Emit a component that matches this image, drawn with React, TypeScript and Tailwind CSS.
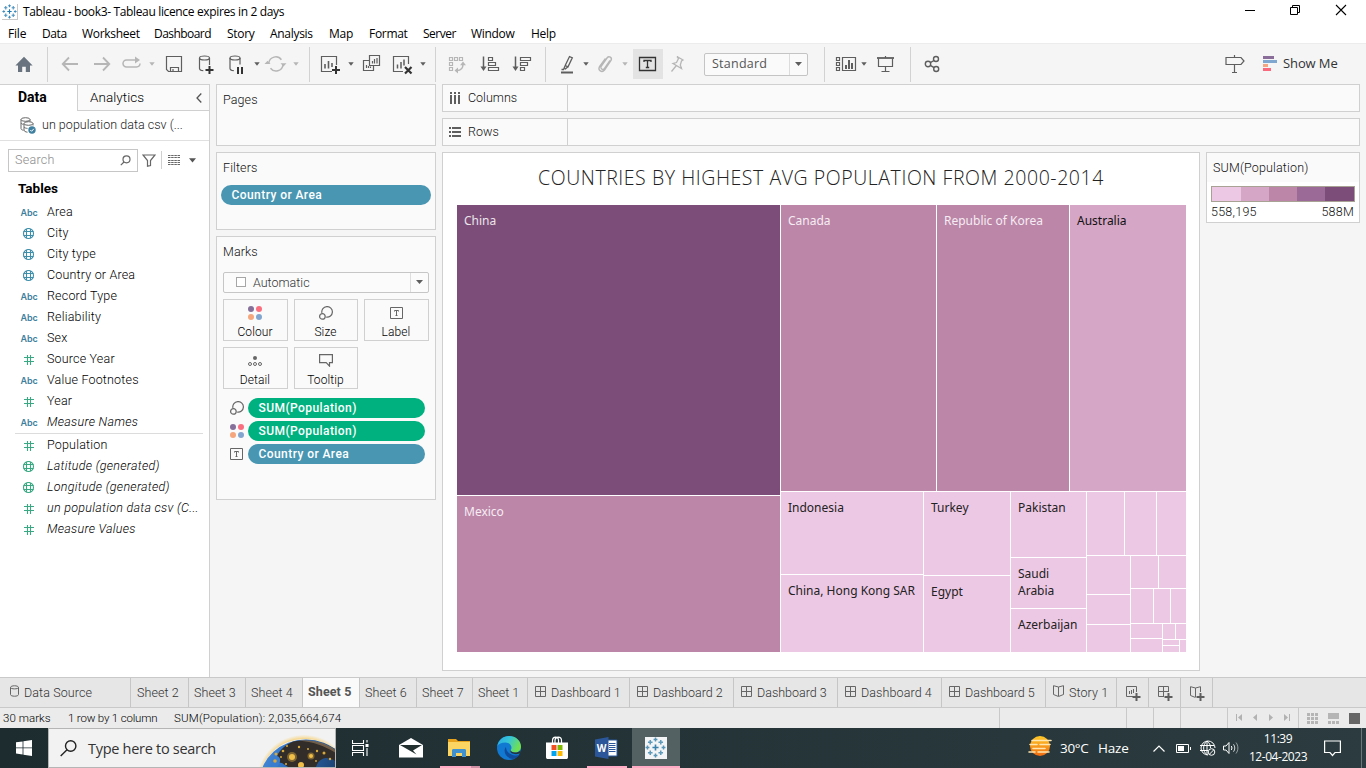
import React from "react";

type Kids = { children?: React.ReactNode };

/* ---------- small helpers ---------- */

const Glyph = ({ children, dim = false }: Kids & { dim?: boolean }) => (
  <svg
    width="24"
    height="24"
    viewBox="0 0 24 24"
    fill="none"
    strokeWidth="1.2"
    className={dim ? "shrink-0 stroke-[#b6b6b6] text-[#b6b6b6]" : "shrink-0 stroke-[#5e5e5e] text-[#5e5e5e]"}
  >
    {children}
  </svg>
);

const Caret = ({ dim = false }: { dim?: boolean }) => (
  <svg width="6" height="4" viewBox="0 0 6 4" className={dim ? "shrink-0 fill-[#b6b6b6]" : "shrink-0 fill-[#5e5e5e]"}>
    <path d="M0.3 0.3h5.4L3 3.7z" />
  </svg>
);

const WideCaret = () => (
  <svg width="7" height="4" viewBox="0 0 7 4" className="shrink-0 fill-[#5e5e5e]">
    <path d="M0 0h7L3.5 4z" />
  </svg>
);

const Cell = ({ className, children }: Kids & { className: string }) => (
  <div className={"flex shrink-0 items-center justify-center " + className}>{children}</div>
);

const Sep = () => <div className="h-[35px] w-px shrink-0 bg-[#d2d2d2]" />;

/* ---------- title bar and menu ---------- */

const TableauMark = ({ size, color }: { size: number; color: string }) => {
  const plus = (x: number, y: number, r: number) => `M${x - r} ${y}h${2 * r}M${x} ${y - r}v${2 * r}`;
  return (
    <svg width={size} height={size} viewBox="0 0 22 22" fill="none" stroke={color}>
      <path strokeWidth="1.7" d={plus(11, 11, 3.2)} />
      <path strokeWidth="1.6" opacity="0.8" d={plus(5.5, 5.5, 2.4) + plus(16.5, 5.5, 2.4) + plus(5.5, 16.5, 2.4) + plus(16.5, 16.5, 2.4)} />
      <path strokeWidth="1.5" opacity="0.85" d={plus(11, 2.6, 2) + plus(11, 19.4, 2) + plus(2.6, 11, 2) + plus(19.4, 11, 2)} />
    </svg>
  );
};

const TitleBar = () => (
  <div className="flex h-6 items-center bg-white">
    <div className="ml-[2px] mb-[1px] flex h-4 w-4 items-center justify-center border-b border-r border-[#c9c9c9]">
      <TableauMark size={15} color="#1f78b0" />
    </div>
    <span className="ml-[5px] whitespace-nowrap font-['Open_Sans'] text-[12px] tracking-[-0.35px] text-black">
      Tableau - book3- Tableau licence expires in 2 days
    </span>
    <svg className="ml-auto mr-[17px]" width="104" height="16" viewBox="0 0 104 16" fill="none" stroke="#000">
      <path d="M0 6.500h10" />
      <path d="M45.500 3.500h7v7h-7zM47.500 3.500v-2h7v7h-2" />
      <path d="M91 1l10 10M101 1l-10 10" strokeWidth="1.1" />
    </svg>
  </div>
);

const MenuBar = () => (
  <div className="flex h-[19px] items-center bg-white font-['Open_Sans'] text-[12px] text-black">
    <span className="ml-2 w-[34px] tracking-[-0.2px]">File</span>
    <span className="w-10 tracking-[-0.4px]">Data</span>
    <span className="w-[72px] tracking-[-0.3px]">Worksheet</span>
    <span className="w-[73px] tracking-[-0.55px]">Dashboard</span>
    <span className="w-[43px] tracking-[-0.3px]">Story</span>
    <span className="w-[59px] tracking-[-0.3px]">Analysis</span>
    <span className="w-10 tracking-[-0.2px]">Map</span>
    <span className="w-[54px] tracking-[-0.3px]">Format</span>
    <span className="w-12 tracking-[-0.5px]">Server</span>
    <span className="w-[60px] tracking-[-0.3px]">Window</span>
    <span className="tracking-[-0.3px]">Help</span>
  </div>
);

/* ---------- toolbar ---------- */

const Plus = ({ x, y, c = "#333" }: { x: number; y: number; c?: string }) => (
  <path d={`M${x - 4} ${y}h8M${x} ${y - 4}v8`} stroke={c} strokeWidth="2" />
);

const Toolbar = () => (
  <div className="flex h-[41px] shrink-0 items-center border-t border-[#ececec] bg-[#f5f5f5]">
    <Cell className="ml-3 w-6">
      <svg width="24" height="24" viewBox="0 0 24 24" fill="#68737f">
        <path d="M12 4.8L20.6 13.6H18V20h-4.2v-5.2h-3.6V20H6v-6.4H3.4z" />
      </svg>
    </Cell>
    <div className="w-[11px]" />
    <Sep />
    <Cell className="ml-[6px] w-8">
      <Glyph dim>
        <path strokeWidth="1.8" d="M20 12H5M11 5.5L4.7 12l6.3 6.5" />
      </Glyph>
    </Cell>
    <Cell className="w-8">
      <Glyph dim>
        <path strokeWidth="1.8" d="M4 12h15M13 5.5l6.3 6.5-6.3 6.5" />
      </Glyph>
    </Cell>
    <Cell className="w-7">
      <Glyph dim>
        <path strokeWidth="1.5" d="M16 8H6.500a3.500 3.500 0 000 7h10a3.500 3.500 0 003.500-3.400" />
        <path fill="currentColor" stroke="none" d="M15 4.600L20 8l-5 3.400z" />
      </Glyph>
    </Cell>
    <Cell className="w-3"><Caret dim /></Cell>
    <Cell className="w-8">
      <Glyph>
        <path d="M4.500 4.500h15v15h-13l-2-2z M8.500 19.500v-4h8v4 M11 17v2.500" />
      </Glyph>
    </Cell>
    <Cell className="w-8">
      <Glyph>
        <ellipse cx="10.500" cy="6" rx="5" ry="2" />
        <path d="M5.500 6v10.500c0 1.200 1.700 2 3.800 2.200M15.500 6v7" />
        <Plus x={15.5} y={18} />
      </Glyph>
    </Cell>
    <Cell className="w-7">
      <Glyph>
        <ellipse cx="11" cy="6" rx="5" ry="2" />
        <path d="M6 6v10.500c0 1.200 1.700 2 3.800 2.200M16 6v6.500" />
        <path stroke="#333" strokeWidth="2" d="M14 15v7M18 15v7" />
      </Glyph>
    </Cell>
    <Cell className="ml-px w-3"><Caret /></Cell>
    <Cell className="-ml-px w-7">
      <Glyph dim>
        <path strokeWidth="1.500" d="M4.800 11a7 7 0 0112.600-3.200M19 13a7 7 0 01-12.500 3.300" />
        <path fill="currentColor" stroke="none" d="M16.500 11.200h6l-3 3.400zM0.500 12.100h6L3.500 8.700z" />
      </Glyph>
    </Cell>
    <Cell className="w-3"><Caret dim /></Cell>
    <div className="w-[7px]" />
    <Sep />
    <Cell className="ml-1 w-8">
      <Glyph>
        <path d="M14 19.500H3.500v-15h15V13" />
        <path strokeWidth="1.600" d="M7 12v4.500M10.500 9v7.500M14 11v4" />
        <Plus x={18} y={18} />
      </Glyph>
    </Cell>
    <Cell className="ml-px w-2"><Caret /></Cell>
    <Cell className="-ml-px w-9">
      <Glyph>
        <path d="M9.500 3.500h10v10h-10zM9.500 8.500h-6v10h10v-5" />
        <path d="M12.500 9v2.500M14.500 7v4.500M17 6v5.500M6.500 13v3M8.500 14v2M10.500 14.500v1.500" />
      </Glyph>
    </Cell>
    <Cell className="w-[26px]">
      <Glyph>
        <path d="M12 19.500H2.500v-15h15V12" />
        <path strokeWidth="1.500" d="M6.500 12.500v4M10 10v6.500M13 7.500v6" />
        <path stroke="#333" strokeWidth="2.200" d="M14 15l6.500 6.500M20.500 15L14 21.500" />
      </Glyph>
    </Cell>
    <Cell className="ml-px w-3"><Caret /></Cell>
    <div className="w-[6px]" />
    <Sep />
    <Cell className="ml-[5px] w-8">
      <Glyph dim>
        <path d="M4.500 5.500h3v3h-3zM9.500 5.500h3v3h-3zM14.500 5.500h3v3h-3zM4.500 10.500h3v3h-3zM4.500 15.500h3v3h-3z" />
        <path d="M18 12c0 4-2 6.500-6 6.500" strokeWidth="1.500" />
        <path fill="currentColor" stroke="none" d="M15 13.200h6L18 9.500zM13 15.500v6L9.500 18.500z" />
      </Glyph>
    </Cell>
    <Cell className="w-[34px]">
      <Glyph>
        <path d="M5.500 4.500v11" strokeWidth="1.500" />
        <path fill="currentColor" stroke="none" d="M2.500 14.500h6l-3 4.500z" />
        <path d="M10.500 5.500h4v3h-4zM10.500 10.500h7v3h-7zM10.500 15.500h10v3h-10z" />
      </Glyph>
    </Cell>
    <Cell className="w-[30px]">
      <Glyph>
        <path d="M5.500 4.500v11" strokeWidth="1.500" />
        <path fill="currentColor" stroke="none" d="M2.500 14.500h6l-3 4.500z" />
        <path d="M10.500 5.500h10v3h-10zM10.500 10.500h7v3h-7zM10.500 15.500h4v3h-4z" />
      </Glyph>
    </Cell>
    <div className="w-[8px]" />
    <Sep />
    <Cell className="ml-[10px] w-6">
      <Glyph>
        <path strokeWidth="2" d="M5 20.500h12" />
        <path strokeWidth="1.300" d="M13.500 4.500l2.800 1.300-4.300 9-2.800-1.300zM9.200 13.500L8 16.500l1.300.6 2.700-2.300M5.500 17.500h2.500" />
      </Glyph>
    </Cell>
    <Cell className="ml-px w-[10px]"><Caret /></Cell>
    <Cell className="ml-px w-[26px]">
      <Glyph dim>
        <path strokeWidth="1.400" d="M15.500 8.500l-5.500 8c-1.500 2-4.500.5-3.500-2l6-8.500c2-2.500 5.500-.5 4 2.500l-6.500 9.500c-2.500 3-7 .5-5-3.500L11 6.500" transform="translate(1.500 0)" />
      </Glyph>
    </Cell>
    <Cell className="ml-[2px] w-[10px]"><Caret dim /></Cell>
    <Cell className="ml-[3px] h-[30px] w-[30px] bg-[#e3e3e3]">
      <Glyph>
        <g stroke="#333">
          <path d="M3.500 5.500h16v13h-16z" strokeWidth="1.300" />
          <path d="M8 10V8.500h7V10M11.500 8.500v7M9.800 15.500h3.400" strokeWidth="1.300" />
        </g>
      </Glyph>
    </Cell>
    <Cell className="w-7">
      <Glyph dim>
        <path strokeWidth="1.300" d="M12 4.500l6 3.500-1.500 1-1.200 4 1.200 3.500-8.500-5 3.500-1 2-4zM11 14l-4.500 5.500" />
      </Glyph>
    </Cell>
    <div className="ml-[13px] flex h-[23px] w-[104px] shrink-0 rounded-[2px] border border-[#c4c4c4] bg-[#fafafa] font-['Open_Sans'] text-[12.500px] leading-[20px] text-[#555]">
      <span className="w-[84px] pl-[7px] tracking-[0.250px]">Standard</span>
      <span className="flex flex-1 items-center justify-center border-l border-[#dcdcdc]"><WideCaret /></span>
    </div>
    <div className="w-4" />
    <Sep />
    <Cell className="ml-2 w-[26px]">
      <Glyph>
        <path d="M2.500 5.500h3v3h-3zM2.500 10.500h3v3h-3zM2.500 15.500h3v3h-3zM8.500 5.500h13v13h-13z" />
        <path strokeWidth="2" d="M12 13v4M15 8v9M18 11v6" />
      </Glyph>
    </Cell>
    <Cell className="ml-px w-2"><Caret /></Cell>
    <Cell className="ml-px w-8">
      <Glyph>
        <path d="M5.500 6.500v8h14v-8M12.500 14.500v5M8.500 19.500h8M12.500 4v2" />
        <path strokeWidth="1.800" d="M4 6h17" />
      </Glyph>
    </Cell>
    <div className="w-[9px]" />
    <Sep />
    <Cell className="ml-[5px] w-8">
      <Glyph>
        <g strokeWidth="1.400">
          <circle cx="8" cy="12" r="2.700" />
          <circle cx="16" cy="7" r="2.500" />
          <circle cx="16.200" cy="17" r="2.500" />
          <path d="M10.300 10.700L14 8.500M10.300 13.300l3.800 2.400" />
        </g>
      </Glyph>
    </Cell>
    <Cell className="ml-auto w-8">
      <Glyph>
        <path d="M3 5.500h15l3 3.500-3 3.500H3zM11.500 3v2.500M11.500 12.500v7.500M9 20.500h5" />
      </Glyph>
    </Cell>
    <svg className="ml-3 mb-[1px] shrink-0" width="14" height="15" viewBox="0 0 14 15">
      <path fill="#8a6d99" d="M0 0h11v3H0z" />
      <path fill="#7fa7d0" d="M0 4h14v3H0z" />
      <path fill="#f4a582" d="M0 8h5v3H0z" />
      <path fill="#fa6a7c" d="M0 12h8v3H0z" />
    </svg>
    <span className="ml-[6px] w-[83px] font-['Open_Sans'] text-[13px] tracking-[-0.100px] text-[#333]">Show Me</span>
  </div>
);

/* ---------- data pane ---------- */

const Globe = ({ color }: { color: string }) => (
  <svg width="12" height="12" viewBox="0 0 12 12" fill="none" stroke={color} strokeWidth="1.100">
    <circle cx="5.500" cy="5.500" r="5" />
    <path d="M3.500 1v9M7.500 1v9M0.500 3.500h10M0.500 7.500h10" />
  </svg>
);

const Hash = () => (
  <svg width="10" height="10" viewBox="0 0 10 10" fill="none" stroke="#3aa882" strokeWidth="1.100">
    <path d="M0 2.500h10M0 6.500h10M3.500 0v10M6.500 0v10" />
  </svg>
);

type Kind = "abc" | "geo" | "geoMeasure" | "num";

const FieldIcon = ({ kind }: { kind: Kind }) => {
  if (kind === "abc")
    return <span className="pt-px font-[Inter] text-[9px] font-semibold tracking-[-0.100px] text-[#3f7f9e]">Abc</span>;
  if (kind === "num") return <Hash />;
  return <Globe color={kind === "geo" ? "#3f8fab" : "#3aa882"} />;
};

const dimensions: [Kind, string, boolean?][] = [
  ["abc", "Area"],
  ["geo", "City"],
  ["geo", "City type"],
  ["geo", "Country or Area"],
  ["abc", "Record Type"],
  ["abc", "Reliability"],
  ["abc", "Sex"],
  ["num", "Source Year"],
  ["abc", "Value Footnotes"],
  ["num", "Year"],
  ["abc", "Measure Names", true],
];

const measures: [Kind, string, boolean?][] = [
  ["num", "Population"],
  ["geoMeasure", "Latitude (generated)", true],
  ["geoMeasure", "Longitude (generated)", true],
  ["num", "un population data csv (C...", true],
  ["num", "Measure Values", true],
];

const Fields = ({ items }: { items: [Kind, string, boolean?][] }) => (
  <ul>
    {items.map(([kind, name, italic]) => (
      <li key={name} className="flex h-[21px] items-center">
        <span className="ml-[19px] mr-[8px] flex w-5 items-center justify-center">
          <FieldIcon kind={kind} />
        </span>
        <span
          className={
            "whitespace-nowrap font-[Roboto] text-[12.500px] font-light text-black " +
            (italic ? "italic tracking-[0.280px]" : "tracking-[0.180px]")
          }
        >
          {name}
        </span>
      </li>
    ))}
  </ul>
);

const DataPane = () => (
  <aside className="flex w-[210px] shrink-0 flex-col border-r border-t border-[#d0d0d0] bg-white font-[Roboto]">
    <div className="flex h-[26px] shrink-0">
      <div className="w-[77px] pl-[18px] text-[14px] font-bold leading-[25px] text-black">Data</div>
      <div className="flex flex-1 items-center border-b border-l border-[#d0d0d0] bg-[#fafafa] pl-3 text-[13.500px] font-light tracking-[0.050px] text-black">
        Analytics
        <svg className="ml-auto mr-[7px]" width="6" height="10" viewBox="0 0 6 10" fill="none" stroke="#555" strokeWidth="1.300">
          <path d="M5.300 0.500L1 5l4.300 4.500" />
        </svg>
      </div>
    </div>
    <div className="flex h-[30px] shrink-0 items-center border-b border-[#e0e0e0]">
      <svg className="ml-[20px]" width="16" height="17" viewBox="0 0 16 17" fill="none" stroke="#666">
        <ellipse cx="5.500" cy="2.500" rx="4.500" ry="1.800" />
        <path d="M1 2.500v9c0 1 1 1.500 2.500 1.800M1 6c.5 1 1.500 1.200 2.500 1.400M10 2.500v2" />
        <ellipse cx="8.500" cy="6.500" rx="4.500" ry="1.800" />
        <path d="M4 6.500v6.500c0 1.200 1.500 2 3.500 2.200M13 6.500v2M4 10c.8 1 2 1.300 3.500 1.400" />
        <circle cx="12" cy="13" r="3.700" fill="#3f80a0" stroke="none" />
        <path stroke="#fff" d="M10.300 13l1.300 1.300 2.200-2.500" />
      </svg>
      <span className="ml-[6px] text-[12.500px] font-light tracking-[0.030px] text-[#222]">un population data csv (...</span>
    </div>
    <div className="flex h-[38px] shrink-0 items-center">
      <div className="ml-2 flex h-[23px] w-[130px] items-center border border-[#c6c6c6] pl-[6px] text-[12.500px] font-light tracking-[0.300px] text-[#8c8c8c]">
        Search
        <svg className="ml-auto mr-[6px]" width="11" height="11" viewBox="0 0 11 11" fill="none" stroke="#666" strokeWidth="1.200">
          <circle cx="6.500" cy="4.300" r="3.500" />
          <path d="M4 7L0.800 10.200" />
        </svg>
      </div>
      <svg className="ml-1" width="14" height="13" viewBox="0 0 14 13" fill="none" stroke="#666" strokeWidth="1.200">
        <path d="M1 1h12L8.500 6.500V11.500l-3 0.700V6.500z" />
      </svg>
      <div className="ml-[5px] h-[18px] w-px bg-[#d0d0d0]" />
      <svg className="ml-[6px]" width="12" height="10" viewBox="0 0 12 10" stroke="#666">
        <path strokeDasharray="2.500 0.666" d="M0 0.500h12M0 2.500h12M0 5.500h12M0 7.500h12M0 9.500h12" />
      </svg>
      <svg className="ml-[9px]" width="7" height="5" viewBox="0 0 7 5" fill="#555">
        <path d="M0 0.300h7L3.500 4.500z" />
      </svg>
    </div>
    <div className="h-[23px] shrink-0 pl-[18px] text-[13.500px] font-bold leading-[18px] text-black">Tables</div>
    <Fields items={dimensions} />
    <div className="ml-[15px] mr-[6px] mb-px h-px shrink-0 bg-[#dcdcdc]" />
    <Fields items={measures} />
  </aside>
);

/* ---------- cards ---------- */

const Dots = () => (
  <svg width="14" height="14" viewBox="0 0 14 14">
    <circle cx="3" cy="3" r="3" fill="#86709a" />
    <circle cx="11" cy="3" r="3" fill="#fa6f80" />
    <circle cx="3" cy="11" r="3" fill="#f5a67c" />
    <circle cx="11" cy="11" r="3" fill="#82a5cf" />
  </svg>
);

const SizeIcon = () => (
  <svg width="14" height="14" viewBox="0 0 14 14" fill="none" stroke="#666" strokeWidth="1.200">
    <path d="M2.900 6.900a5.300 5.300 0 114.300 4.200" />
    <circle cx="3.400" cy="10.400" r="2.800" />
  </svg>
);

const LabelIcon = () => (
  <svg width="13" height="12" viewBox="0 0 13 12" fill="none" stroke="#666">
    <path d="M0.500 0.500h12v11h-12zM4.500 4.500v-1h4v1M6.500 3.500v5M5.500 8.500h2" />
  </svg>
);

const DetailIcon = () => (
  <svg width="14" height="12" viewBox="0 0 14 12" fill="none" stroke="#666">
    <circle cx="7" cy="3" r="2" fill="#666" stroke="none" />
    <circle cx="2" cy="9" r="1.500" />
    <circle cx="7" cy="9" r="1.500" />
    <circle cx="12" cy="9" r="1.500" />
  </svg>
);

const TooltipIcon = () => (
  <svg width="14" height="13" viewBox="0 0 14 13" fill="none" stroke="#666" strokeWidth="1.200">
    <path d="M0.600 0.600h12.800v8H10.500v3.500l-3.300-3.500H0.600z" />
  </svg>
);

const MarkButton = ({ label, w, children }: Kids & { label: string; w: string }) => (
  <div className={"flex h-[42px] flex-col items-center border border-[#d0d0d0] bg-[#fafafa] pt-[5px] pr-px " + w}>
    <div className="flex h-4 items-center justify-center">{children}</div>
    <div className="mt-[3px] text-[12px] leading-4 tracking-[0.100px] text-black">{label}</div>
  </div>
);

const Pill = ({ className, children }: Kids & { className: string }) => (
  <div className={"h-5 rounded-full pl-[10.500px] text-[12px] font-medium leading-5 tracking-[0.430px] text-white " + className}>{children}</div>
);

const Encoding = ({ icon, className, children }: Kids & { icon: React.ReactNode; className: string }) => (
  <div className="flex items-center">
    <div className="flex w-[25px] shrink-0 pl-[7px]">{icon}</div>
    <Pill className={"w-[177px] " + className}>{children}</Pill>
  </div>
);

const Cards = () => (
  <div className="flex w-[220px] shrink-0 flex-col gap-[6px] font-[Roboto] text-[12.500px] font-light tracking-[0.100px] text-[#111]">
    <section className="h-[62px] border border-[#d0d0d0] bg-[#fafafa] pl-[6px] pt-[6px]">Pages</section>
    <section className="h-[78px] border border-[#d0d0d0] bg-[#fafafa] px-1 pt-[6px]">
      <div className="pl-[2px]">Filters</div>
      <Pill className="mt-[7px] bg-[#4996b2]">Country or Area</Pill>
    </section>
    <section className="h-[264px] border border-[#d0d0d0] bg-[#fafafa] px-[6px] pt-[6px]">
      <div>Marks</div>
      <div className="mt-[10px] flex h-[21px] rounded-[2px] border border-[#c6c6c6] bg-[#fbfbfb] leading-[19px] text-[#333]">
        <span className="ml-3 mt-[4px] h-[10px] w-[10px] border border-[#a6a6a6] bg-white" />
        <span className="ml-[7px] tracking-[0px]">Automatic</span>
        <span className="ml-auto flex w-[18px] items-center justify-center border-l border-[#dedede]">
          <WideCaret />
        </span>
      </div>
      <div className="mt-[6px] flex flex-wrap gap-[6px]">
        <MarkButton w="w-[65px]" label="Colour"><Dots /></MarkButton>
        <MarkButton w="w-16" label="Size"><SizeIcon /></MarkButton>
        <MarkButton w="w-[65px]" label="Label"><LabelIcon /></MarkButton>
        <MarkButton w="w-[65px]" label="Detail"><DetailIcon /></MarkButton>
        <MarkButton w="w-16" label="Tooltip"><TooltipIcon /></MarkButton>
      </div>
      <div className="mt-[9px] flex flex-col gap-[3px]">
        <Encoding icon={<SizeIcon />} className="bg-[#00b180]">SUM(Population)</Encoding>
        <Encoding icon={<Dots />} className="bg-[#00b180]">SUM(Population)</Encoding>
        <Encoding icon={<LabelIcon />} className="bg-[#4996b2]">Country or Area</Encoding>
      </div>
    </section>
  </div>
);

/* ---------- treemap ---------- */

type Node = {
  size: number;
  dir?: "row" | "col";
  kids?: Node[];
  label?: string;
  tone?: string;
};

const leaf = (size: number, label = "", tone = "bg-[#edc8e4] text-[#222]"): Node => ({ size, label, tone });
const row = (size: number, ...kids: Node[]): Node => ({ size, dir: "row", kids });
const col = (size: number, ...kids: Node[]): Node => ({ size, dir: "col", kids });

const mid = "bg-[#bb86a8] text-[#f6ecf3]";

const tree: Node = row(
  447,
  col(323, leaf(290, "China", "bg-[#7b4d78] text-[#ece4eb]"), leaf(156, "Mexico", mid)),
  col(
    405,
    row(286, leaf(155, "Canada", mid), leaf(132, "Republic of Korea", mid), leaf(116, "Australia", "bg-[#d5a6c6] text-[#111]")),
    row(
      160,
      col(142, leaf(82, "Indonesia"), leaf(77, "China, Hong Kong SAR")),
      col(86, leaf(83, "Turkey"), leaf(76, "Egypt")),
      col(75, leaf(65, "Pakistan"), leaf(50, "Saudi\nArabia"), leaf(43, "Azerbaijan")),
      col(
        99,
        row(63, leaf(37), leaf(31), leaf(29)),
        row(
          96,
          col(43, leaf(38), leaf(29), leaf(27)),
          col(
            55,
            row(32, leaf(27), leaf(27)),
            row(34, leaf(22), leaf(16), leaf(15)),
            row(
              28,
              col(31, leaf(14), leaf(13)),
              col(23, row(15, leaf(12), leaf(10)), row(12, col(16, leaf(5), leaf(6)), leaf(6)))
            )
          )
        )
      )
    )
  )
);

const Tile = ({ node, along }: { node: Node; along: "row" | "col" }) => {
  const style = along === "row" ? { width: node.size } : { height: node.size };
  if (node.kids)
    return (
      <div style={style} className={node.dir === "row" ? "flex shrink-0 gap-px" : "flex shrink-0 flex-col gap-px"}>
        {node.kids.map((k, i) => (
          <Tile key={i} node={k} along={node.dir!} />
        ))}
      </div>
    );
  return (
    <div style={style} className={"shrink-0 overflow-hidden " + node.tone}>
      {node.label && <div className="whitespace-pre pl-[7px] pt-[7px] leading-[17px]">{node.label}</div>}
    </div>
  );
};

const Shelf = ({ name, children }: Kids & { name: string }) => (
  <div className="flex h-7 shrink-0 border border-[#d0d0d0] bg-[#fafafa] font-[Roboto] text-[12.500px] font-light text-[#111]">
    <div className="flex w-[125px] items-center border-r border-[#d0d0d0] pl-[6px]">
      {children}
      <span className="ml-[7px]">{name}</span>
    </div>
  </div>
);

const Worksheet = () => (
  <div className="flex w-[918px] shrink-0 flex-col gap-[6px]">
    <Shelf name="Columns">
      <svg width="12" height="12" viewBox="0 0 12 12" fill="#5e5e5e">
        <path d="M1 0h2v2H1zM5 0h2v2H5zM9 0h2v2H9zM1 3h2v9H1zM5 3h2v9H5zM9 3h2v9H9z" />
      </svg>
    </Shelf>
    <Shelf name="Rows">
      <svg width="12" height="10" viewBox="0 0 12 10" fill="#5e5e5e">
        <path d="M0 0h2v2H0zM0 4h2v2H0zM0 8h2v2H0zM3 0h9v2H3zM3 4h9v2H3zM3 8h9v2H3z" />
      </svg>
    </Shelf>
    <div className="flex gap-[6px]">
      <div className="h-[519px] w-[758px] border border-[#d0d0d0] bg-white pl-[14px]">
        <h1 className="h-[52px] w-[728px] whitespace-nowrap pt-[11px] text-center font-['Open_Sans'] text-[19.500px] font-light leading-[28px] tracking-[0.560px] text-[#222]">
          COUNTRIES BY HIGHEST AVG POPULATION FROM 2000-2014
        </h1>
        <div className="flex font-['Noto_Sans'] text-[12px]">
          <Tile node={tree} along="col" />
        </div>
      </div>
      <div className="h-[71px] w-[154px] border border-[#d0d0d0] bg-white font-[Roboto] text-[12.500px] font-light text-[#111]">
        <div className="h-[29px] bg-[#fafafa] pl-[6px] leading-[29px] tracking-[0.150px]">SUM(Population)</div>
        <div className="ml-1 mt-[4px] flex h-4 w-36 border border-[#a8a295]">
          <div className="w-[29px] bg-[#edc8e4]" />
          <div className="w-7 bg-[#d5a6c6]" />
          <div className="w-7 bg-[#bb86a8]" />
          <div className="w-7 bg-[#9b6a97]" />
          <div className="flex-1 bg-[#7b4d78]" />
        </div>
        <div className="ml-1 mr-[5px] flex justify-between leading-[19px] tracking-[0.250px]">
          <span>558,195</span>
          <span>588M</span>
        </div>
      </div>
    </div>
  </div>
);

/* ---------- sheet tabs and status bar ---------- */

const GridIcon = () => (
  <svg width="11" height="11" viewBox="0 0 11 11" fill="none" stroke="#666">
    <path d="M0.500 0.500h10v10h-10zM5.500 0.500v10M0.500 5.500h10" />
  </svg>
);

const BookIcon = () => (
  <svg width="11" height="12" viewBox="0 0 11 12" fill="none" stroke="#666">
    <path d="M5.500 2L0.500 0.700V9.500L5.500 11.500l5-2V0.700L5.500 2zM5.500 2v9" />
  </svg>
);

const Tab = ({ w, icon, children }: Kids & { w: string; icon?: React.ReactNode }) => (
  <div className={"flex shrink-0 items-center whitespace-nowrap border-r border-[#c6c6c6] " + w}>
    {icon && <span className="mb-[3px] mr-[5px]">{icon}</span>}
    <span className="pt-px">{children}</span>
  </div>
);

const NewTab = ({ d }: { d: string }) => (
  <div className="flex w-8 shrink-0 items-center justify-center border-r border-[#c6c6c6]">
    <svg width="16" height="16" viewBox="0 0 16 16" fill="none" stroke="#666">
      <path d={d} />
      <path d="M7.500 12h8M11.500 8v8" strokeWidth="2" stroke="#5e5e5e" />
    </svg>
  </div>
);

const SheetTabs = () => (
  <div className="flex h-[31px] shrink-0 border-y border-[#c9c9c9] bg-[#e6e6e6] font-[Roboto] text-[12.500px] font-light tracking-[0.100px] text-[#333]">
    <Tab
      w="w-[131px] pl-[10px]"
      icon={
        <svg width="9" height="12" viewBox="0 0 9 12" fill="none" stroke="#666">
          <path d="M0.500 2.500c0-2.300 8-2.300 8 0v7c0 2.300-8 2.300-8 0zM0.500 2.500c0 1.800 8 1.800 8 0" />
        </svg>
      }
    >
      Data Source
    </Tab>
    <Tab w="w-[58px] pl-[6px]">Sheet 2</Tab>
    <Tab w="w-[57px] pl-[5px]">Sheet 3</Tab>
    <Tab w="w-[57px] pl-[5px]">Sheet 4</Tab>
    <Tab w="w-[57px] bg-[#fafafa] pl-[5px] pb-[2px] font-bold text-[#555] tracking-[0.100px]">Sheet 5</Tab>
    <Tab w="w-[57px] pl-[5px]">Sheet 6</Tab>
    <Tab w="w-[56px] pl-[5px]">Sheet 7</Tab>
    <Tab w="w-[55px] pl-[5px] tracking-[0px]">Sheet 1</Tab>
    <Tab w="w-[102px] pl-[7px] tracking-[0px]" icon={<GridIcon />}>Dashboard 1</Tab>
    <Tab w="w-[104px] pl-[7px] tracking-[0px]" icon={<GridIcon />}>Dashboard 2</Tab>
    <Tab w="w-[104px] pl-[7px] tracking-[0px]" icon={<GridIcon />}>Dashboard 3</Tab>
    <Tab w="w-[104px] pl-[7px]" icon={<GridIcon />}>Dashboard 4</Tab>
    <Tab w="w-[104px] pl-[7px] tracking-[0px]" icon={<GridIcon />}>Dashboard 5</Tab>
    <Tab w="w-[71px] pl-[7px]" icon={<BookIcon />}>Story 1</Tab>
    <NewTab d="M8 11.500H1.500v-10h10V7M4.500 6v3M6.500 5v4M8.500 4v4" />
    <NewTab d="M7 11.500H1.500v-10h10V7M6.500 1.500v10M1.500 6.500h10" />
    <NewTab d="M6.500 3L1.500 1.700V10.500L6.500 12.500M11.500 7V1.700L6.500 3v9" />
  </div>
);

const StatusBar = () => (
  <div className="flex h-5 shrink-0 items-center bg-[#ebebeb] font-[Roboto] text-[11.500px] font-light text-black">
    <span className="ml-[3px] w-[65px] pt-px tracking-[0.050px]">30 marks</span>
    <span className="w-[106px] pt-px tracking-[-0.180px]">1 row by 1 column</span>
    <span className="w-[825px] pt-px tracking-[0.200px]">SUM(Population): 2,035,664,674</span>
    <div className="h-5 w-[127px] border-l border-[#c9c9c9]" />
    <div className="h-5 w-[27px] border-l border-[#c9c9c9]" />
    <div className="h-5 w-[27px] border-l border-[#c9c9c9]" />
    <div className="h-5 w-[47px] border-l border-[#c9c9c9]" />
    <div className="flex h-5 w-[71px] items-center border-l border-[#c9c9c9] pl-[8px]">
      <svg width="55" height="8" viewBox="0 0 55 8" fill="#b2b2b2">
        <path d="M0 0h1v7H0zM6 0v7L2 3.500zM21 0v7l-4-3.500zM33 0v7l4-3.500zM48 0v7l4-3.500zM53 0h1v7h-1z" />
      </svg>
    </div>
    <div className="flex h-5 flex-1 items-center border-l border-[#c9c9c9] pl-[8px]">
      <svg width="54" height="11" viewBox="0 0 54 11" fill="#b5b5b5">
        <path d="M0 0h3v3H0zM4 0h3v3H4zM8 0h3v3H8zM0 4h3v3H0zM4 4h3v3H4zM8 4h3v3H8zM0 8h3v3H0zM4 8h3v3H4zM8 8h3v3H8z" />
        <path d="M21 0h11v6H21zM21 8h3v3h-3zM25 8h3v3h-3zM29 8h3v3h-3z" />
        <path fill="#666" d="M42 0h11v11H42z" />
      </svg>
    </div>
  </div>
);

/* ---------- windows taskbar ---------- */

const EarthArt = () => (
  <svg className="ml-auto" width="76" height="38" viewBox="0 0 76 38">
    <defs>
      <radialGradient id="halo" cx="0.5" cy="0.5" r="0.5">
        <stop offset="0.86" stopColor="#f3cf7b" />
        <stop offset="0.93" stopColor="#f6d994" />
        <stop offset="1" stopColor="#f6e6c0" stopOpacity="0.3" />
      </radialGradient>
      <linearGradient id="sea" x1="0" y1="0" x2="1" y2="0.3">
        <stop offset="0" stopColor="#4a90e0" />
        <stop offset="0.35" stopColor="#2f6fc0" />
        <stop offset="1" stopColor="#17365c" />
      </linearGradient>
    </defs>
    <circle cx="45" cy="53" r="47" fill="url(#halo)" />
    <ellipse cx="46" cy="54" rx="46" ry="44" fill="#f0efe9" />
    <ellipse cx="47" cy="52" rx="46" ry="41.500" fill="url(#sea)" />
    <path fill="#322d29" d="M34 12.500c14-2.500 28-.5 42 8.500v11c-6-5-16-4-19 6H29l-6-4-7-1 3-8c4-6 8-9.500 15-12.500z" />
    <path fill="#8d7356" opacity="0.7" d="M40 11.500c13-1 26 2 36 9v3c-11-7-22-10.500-36-12z" />
    <path fill="#3a7dce" d="M14 29c3-4 8-1 7 3 0 3-2 5-4 6h-5z" />
    <g fill="#d9a83a">
      <circle cx="33" cy="28" r="5" opacity="0.450" />
      <circle cx="33" cy="28" r="3" fill="#f0bf48" />
      <circle cx="52" cy="27" r="3.500" opacity="0.450" />
      <circle cx="52" cy="27" r="2" fill="#f0bf48" />
      <circle cx="42" cy="36" r="3" fill="#f0bf48" />
      <circle cx="24" cy="22" r="1.300" />
      <circle cx="17" cy="25" r="1.500" />
      <circle cx="16" cy="32" r="1.800" />
      <circle cx="22" cy="28" r="1" />
      <circle cx="40" cy="18" r="1.200" />
      <circle cx="49" cy="20" r="1" />
      <circle cx="58" cy="22" r="1.200" />
      <circle cx="65" cy="24" r="1.500" />
      <circle cx="71" cy="30" r="1.200" />
      <circle cx="28" cy="17" r="1" />
      <circle cx="27" cy="35" r="1.100" />
      <circle cx="57" cy="32" r="0.900" />
    </g>
  </svg>
);

const Underline = ({ className }: { className: string }) => (
  <span className={"absolute bottom-0 h-[2px] bg-[#ffabc6] " + className} />
);

const Taskbar = () => (
  <div className="flex h-10 shrink-0 items-center bg-gradient-to-r from-[#1d2c2f] to-[#2b3b3f] font-['Open_Sans'] text-white">
    <div className="flex w-12 shrink-0 justify-center">
      <svg width="16" height="16" viewBox="0 0 16 16" fill="#fff">
        <path d="M0 2.300l6.600-.9v6.100H0zM7.400 1.300L16 0v7.500H7.400zM0 8.300h6.600v6.200L0 13.600zM7.400 8.300H16V16l-8.600-1.300z" />
      </svg>
    </div>
    <div className="flex h-10 w-72 shrink-0 items-center border border-[#b5b5b5] bg-[#f2f2f2]">
      <svg className="ml-[11px]" width="17" height="17" viewBox="0 0 17 17" fill="none" stroke="#222" strokeWidth="1.400">
        <circle cx="10.700" cy="6" r="5.200" />
        <path d="M7 9.800L0.700 16" />
      </svg>
      <span className="ml-[11px] w-[150px] shrink-0 whitespace-nowrap pt-px text-[14.500px] tracking-[-0.290px] text-[#333]">Type here to search</span>
      <EarthArt />
    </div>
    <div className="flex w-12 shrink-0 justify-center">
      <svg width="17" height="16" viewBox="0 0 17 16" fill="none" stroke="#fff" strokeWidth="1.100">
        <path d="M0.500 0v3.500h11V0M0.500 5.500h11v5h-11zM0.500 16v-3.500h11V16M15 0v2.500M15 8v8" />
        <path d="M13.500 4h3v3h-3z" fill="#fff" stroke="none" />
      </svg>
    </div>
    <div className="flex w-[54px] shrink-0 justify-center">
      <svg width="24" height="20" viewBox="0 0 24 20">
        <path fill="#fff" d="M0 7L12 0l12 7v12.500H0z" />
        <path fill="#22302f" d="M1 7h22l-9 5.500 3.500 4z" />
      </svg>
    </div>
    <div className="relative flex h-10 w-[42px] shrink-0 items-center justify-center">
      <svg width="22" height="18" viewBox="0 0 22 18">
        <path fill="#e9a21b" d="M0 0h8l2 2h12v6H0z" />
        <path fill="#fcd462" d="M0 3h22v14H0z" />
        <path fill="#3f91d0" d="M4 18v-6.500c0-1 .6-1.500 1.500-1.500h11c1 0 1.500.6 1.500 1.500V18h-4v-4H8v4z" />
      </svg>
      <Underline className="left-[2px] w-[31px]" />
      <span className="absolute bottom-0 left-[33px] h-[2px] w-[9px] bg-[#cf8fa5]" />
    </div>
    <div className="flex w-[58px] shrink-0 justify-center">
      <svg width="24" height="24" viewBox="0 0 24 24">
        <defs>
          <linearGradient id="edgeTop" x1="0" y1="0" x2="1" y2="0.4">
            <stop offset="0" stopColor="#2ba7e4" />
            <stop offset="0.5" stopColor="#35c5d8" />
            <stop offset="1" stopColor="#6fe053" />
          </linearGradient>
        </defs>
        <circle cx="12" cy="12" r="12" fill="#1279d3" />
        <path fill="url(#edgeTop)" d="M0.300 10C1.500 4 6 0 12 0c7 0 12 5 12 10.500 0 4-3 6-6 6-3.500 0-4.500-1.200-4.500-2 0-.6 1-.9 1-2.700C14.500 9 12 6.500 8.500 6.500 4.500 6.500 1.500 8 .3 10z" />
        <path fill="#0f4c9c" d="M9 11c-3 3-1.500 11 7 12 3-.8 5-2.300 6.700-4.500-2.700 1.200-5.700 1.200-8.200 0C11 17 9 14.500 9 11z" />
        <path fill="#25333a" d="M23.500 17c-2 1.400-6.500 1.600-9 .1-1.300-.8-1.300-2.100-1-3 .3 1.500 2.200 2.500 4.500 2.500 2.300 0 4-.8 5.500-2.200z" />
      </svg>
    </div>
    <div className="flex w-[38px] shrink-0 justify-center">
      <svg width="24" height="24" viewBox="0 0 24 24">
        <path fill="none" stroke="#fff" strokeWidth="1.200" d="M7.500 7V4.500C7.500 0 13.500 0 13.500 4.500V7M10 7V4.500C10 0 16.500 0 16.500 4.500V7" />
        <path fill="#fff" d="M1 6.500h22V21c0 1.400-.6 2-2 2H3c-1.400 0-2-.6-2-2z" />
        <path fill="#f25022" d="M6.500 9h5v5h-5z" />
        <path fill="#7fba00" d="M12.500 9h5v5h-5z" />
        <path fill="#00a4ef" d="M6.500 15h5v5h-5z" />
        <path fill="#ffb900" d="M12.500 15h5v5h-5z" />
      </svg>
    </div>
    <div className="relative flex h-10 w-[60px] shrink-0 items-center justify-center">
      <svg width="23" height="22" viewBox="0 0 23 22">
        <path fill="#fff" stroke="#2b579a" d="M12 3h10v16H12z" />
        <path stroke="#2b579a" d="M14 6.500h6.500M14 8.500h6.500M14 10.500h6.500M14 12.500h6.500M14 14.500h6.500" />
        <path fill="#2b579a" d="M0 2.500L13.500 0v22L0 19.500z" />
        <text x="1.800" y="15" fontFamily="Open Sans" fontSize="10" fontWeight="700" fill="#fff">W</text>
      </svg>
      <Underline className="left-[11px] w-10" />
    </div>
    <div className="relative -ml-[4px] flex h-10 w-12 shrink-0 items-center justify-center bg-[#536163]">
      <div className="mb-[1px] mr-px flex h-[22px] w-[22px] items-center justify-center bg-[#f2f4f5]">
        <TableauMark size={21} color="#3b83ad" />
      </div>
      <Underline className="left-0 w-12" />
    </div>
    <svg className="mb-[2px] ml-auto" width="25" height="22" viewBox="0 0 25 22">
      <defs>
        <linearGradient id="sun" x1="0" y1="0" x2="0" y2="1">
          <stop offset="0" stopColor="#ffc928" />
          <stop offset="1" stopColor="#ef6a10" />
        </linearGradient>
      </defs>
      <circle cx="12" cy="10" r="10" fill="url(#sun)" />
      <g stroke="#ffe6b0" strokeWidth="1.600" strokeLinecap="round">
        <path d="M4 4.500h19M2 8.500h7M12 8.500h10M5 12.500h12M1 16h6M10 16h11" />
      </g>
    </svg>
    <span className="ml-[7px] w-[38px] whitespace-nowrap text-[13.500px] tracking-[-0.300px]">30°C</span>
    <span className="w-[55px] text-[13.500px] tracking-[-0.200px]">Haze</span>
    <svg width="12" height="7" viewBox="0 0 12 7" fill="none" stroke="#fff" strokeWidth="1.200">
      <path d="M0.500 6.500L6 1l5.500 5.500" />
    </svg>
    <svg className="ml-[11px]" width="15" height="9" viewBox="0 0 15 9" fill="none" stroke="#fff">
      <path d="M0.500 0.500h12v8h-12zM14.500 3v3" />
      <path fill="#fff" stroke="none" d="M2 2h6v5H2z" />
    </svg>
    <svg className="ml-[8px]" width="17" height="16" viewBox="0 0 17 16" fill="none" stroke="#fff">
      <path d="M9 15a7 7 0 117-7M8 1C3.500 5 3.500 11 8 15M8 1c2.500 2 3.500 4 3.500 7M1 5.500h14M1 10.500h8M8 1v14" />
      <circle cx="12.500" cy="12" r="3.300" />
      <path d="M10.300 14.300l4.500-4.500" />
    </svg>
    <svg className="ml-[7px]" width="17" height="14" viewBox="0 0 17 14" fill="none" stroke="#fff">
      <path d="M0.500 5h2.500l3-3.500v11L3 9H0.500z" />
      <path d="M8.300 5c.8 1.200.8 2.800 0 4" />
      <path opacity="0.800" d="M10.500 3.300c1.700 2.200 1.700 5.200 0 7.400" />
      <path opacity="0.500" d="M13 1.500c2.500 3.300 2.500 7.700 0 11" />
    </svg>
    <div className="ml-[5px] w-[66px] whitespace-nowrap text-center text-[12px] leading-[18px] tracking-[-0.450px]">
      11:39
      <br />
      12-04-2023
    </div>
    <svg className="ml-[13px]" width="17" height="17" viewBox="0 0 17 17" fill="none" stroke="#fff" strokeWidth="1.200">
      <path d="M0.600 1h15.800v11.500H11L8.500 15.500 6 12.500H0.600z" />
    </svg>
    <div className="ml-[20px] mr-1 h-10 w-px bg-[#6b7679]" />
  </div>
);

export default function App() {
  return (
    <div className="flex h-[768px] w-[1366px] flex-col overflow-hidden bg-[#f5f5f5]">
      <TitleBar />
      <MenuBar />
      <Toolbar />
      <main className="flex h-[593px] shrink-0 gap-[6px]">
        <DataPane />
        <Cards />
        <Worksheet />
      </main>
      <SheetTabs />
      <StatusBar />
      <Taskbar />
    </div>
  );
}
